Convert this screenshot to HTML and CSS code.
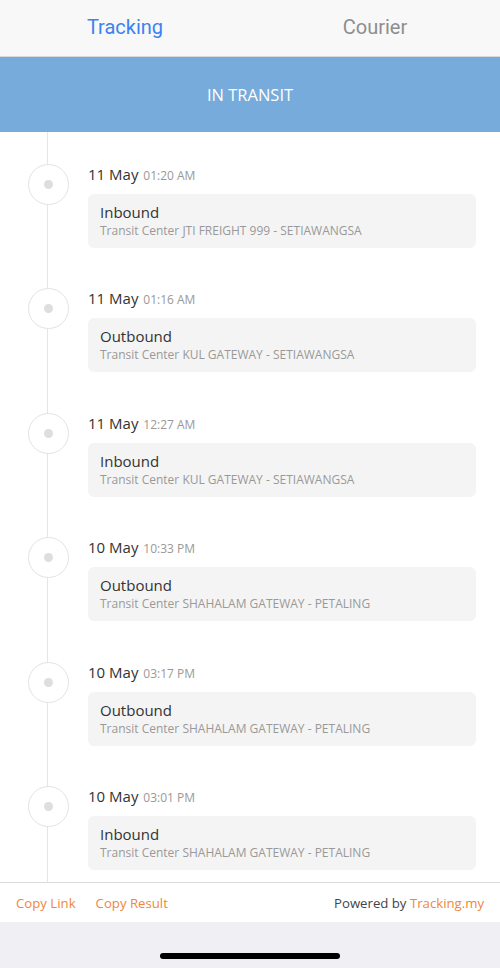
FILE: index.html
```html
<!DOCTYPE html>
<html>
<head lang="en">
    <meta charset="UTF-8">
    <title>Tracking</title>
    <link rel="stylesheet" href="styles.css">
</head>
<body>
    <div class="tabs">
        <span class="tab current">Tracking</span>
        <span class="tab">Courier</span>
    </div>
    <div class="status">IN TRANSIT</div>
    <div class="timeline">
        <div class="item">
            <span class="dot"></span>
            <div class="when">11 May <span class="time">01:20 AM</span></div>
            <div class="card">
                <div class="title">Inbound</div>
                <div class="place">Transit Center JTI FREIGHT 999 - SETIAWANGSA</div>
            </div>
        </div>
        <div class="item">
            <span class="dot"></span>
            <div class="when">11 May <span class="time">01:16 AM</span></div>
            <div class="card">
                <div class="title">Outbound</div>
                <div class="place">Transit Center KUL GATEWAY - SETIAWANGSA</div>
            </div>
        </div>
        <div class="item">
            <span class="dot"></span>
            <div class="when">11 May <span class="time">12:27 AM</span></div>
            <div class="card">
                <div class="title">Inbound</div>
                <div class="place">Transit Center KUL GATEWAY - SETIAWANGSA</div>
            </div>
        </div>
        <div class="item">
            <span class="dot"></span>
            <div class="when">10 May <span class="time">10:33 PM</span></div>
            <div class="card">
                <div class="title">Outbound</div>
                <div class="place">Transit Center SHAHALAM GATEWAY - PETALING</div>
            </div>
        </div>
        <div class="item">
            <span class="dot"></span>
            <div class="when">10 May <span class="time">03:17 PM</span></div>
            <div class="card">
                <div class="title">Outbound</div>
                <div class="place">Transit Center SHAHALAM GATEWAY - PETALING</div>
            </div>
        </div>
        <div class="item">
            <span class="dot"></span>
            <div class="when">10 May <span class="time">03:01 PM</span></div>
            <div class="card">
                <div class="title">Inbound</div>
                <div class="place">Transit Center SHAHALAM GATEWAY - PETALING</div>
            </div>
        </div>
    </div>
    <div class="footer">
        <a class="link">Copy Link</a>
        <a class="link">Copy Result</a>
        <span class="powered">Powered by <a class="link">Tracking.my</a></span>
    </div>
    <div class="home">
        <span class="bar"></span>
    </div>
</body>
</html>
```

FILE: styles.css
```css
* {
    margin: 0;
    padding: 0;
    box-sizing: border-box;
}
body {
    width: 500px;
    height: 968px;
    overflow: hidden;
    font-family: "Open Sans", "Liberation Sans", sans-serif;
    color: #333;
    background: #fff;
}
.tabs {
    display: flex;
    height: 57px;
    background: #f8f8f8;
    border-bottom: 1px solid #d9d9d9;
}
.tab {
    flex: 1;
    text-align: center;
    line-height: 54px;
    font-family: Roboto, "Liberation Sans", sans-serif;
    font-size: 20px;
    color: #8e8e8e;
}
.tab.current {
    color: #3b82f2;
}
.status {
    height: 75px;
    line-height: 75px;
    background: #76abdb;
    color: #fff;
    text-align: center;
    font-size: 16.5px;
}
.timeline {
    height: 750px;
    overflow: hidden;
    background: linear-gradient(#e6e6e6, #e6e6e6) no-repeat 47px 0 / 1px 100%;
}
.item {
    position: relative;
    padding: 30px 24px 8.4px 88px;
}
/* 圆点盖在竖线上 */
.dot {
    position: absolute;
    left: 28px;
    top: 32px;
    width: 41px;
    height: 41px;
    border: 1px solid #e3e3e3;
    border-radius: 50%;
    background: #fff;
}
.dot::after {
    content: "";
    position: absolute;
    left: 15px;
    top: 15px;
    width: 9px;
    height: 9px;
    border-radius: 50%;
    background: #dedede;
}
.when {
    height: 24px;
    line-height: 24px;
    font-size: 15px;
    color: #333;
}
.time {
    margin-left: 1px;
    font-size: 12px;
    color: #999;
}
.card {
    margin-top: 8px;
    height: 54px;
    padding: 8px 12px;
    border-radius: 6px;
    background: #f4f4f4;
}
.title {
    line-height: 20px;
    font-size: 15px;
    color: #333;
}
.place {
    line-height: 18px;
    font-size: 12px;
    color: #999;
}
.footer {
    display: flex;
    align-items: center;
    height: 40px;
    padding: 0 16px;
    border-top: 1px solid #dcdcdc;
    background: #fff;
    font-size: 13.2px;
}
.link {
    color: #f0873a;
    margin-right: 20px;
}
.powered {
    margin-left: auto;
    color: #444;
}
.powered .link {
    margin-right: 0;
}
.home {
    height: 46px;
    background: #efeff4;
    display: flex;
    justify-content: center;
    padding-top: 31px;
}
.bar {
    width: 180px;
    height: 6px;
    border-radius: 3px;
    background: #000;
}
```
